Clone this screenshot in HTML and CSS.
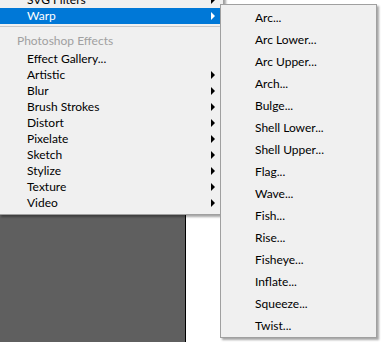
FILE: index.html
```html
<!DOCTYPE html>
<html lang="en">
<head>
  <meta charset="UTF-8">
  <title>Filter Menu</title>
  <link rel="stylesheet" href="styles.css">
</head>
<body>
  <div class="workspace">
    <div class="panel"></div>
    <div class="doc"></div>

    <ul class="menu">
      <li class="item has-sub">SVG Filters</li>
      <li class="item has-sub active">Warp</li>
      <li class="sep"></li>
      <li class="header">Photoshop Effects</li>
      <li class="item">Effect Gallery...</li>
      <li class="item has-sub">Artistic</li>
      <li class="item has-sub">Blur</li>
      <li class="item has-sub">Brush Strokes</li>
      <li class="item has-sub">Distort</li>
      <li class="item has-sub">Pixelate</li>
      <li class="item has-sub">Sketch</li>
      <li class="item has-sub">Stylize</li>
      <li class="item has-sub">Texture</li>
      <li class="item has-sub">Video</li>
    </ul>

    <ul class="submenu">
      <li>Arc...</li>
      <li>Arc Lower...</li>
      <li>Arc Upper...</li>
      <li>Arch...</li>
      <li>Bulge...</li>
      <li>Shell Lower...</li>
      <li>Shell Upper...</li>
      <li>Flag...</li>
      <li>Wave...</li>
      <li>Fish...</li>
      <li>Rise...</li>
      <li>Fisheye...</li>
      <li>Inflate...</li>
      <li>Squeeze...</li>
      <li>Twist...</li>
    </ul>
  </div>
</body>
</html>
```

FILE: styles.css
```css
body {
  margin: 0;
  font-family: Lato, "Noto Sans", sans-serif;
  font-size: 12px;
  color: #000;
  background: #fff;
}
ul {
  list-style: none;
  margin: 0;
  padding: 0;
}
.workspace {
  position: relative;
  display: flex;
  height: 342px;
  overflow: hidden;
}
.panel {
  width: 185px;
  background: #5f5f5f;
  border-right: 1px solid #000;
}
.doc {
  flex: 1;
  background: #fff;
}

.menu {
  position: absolute;
  left: -1px;
  top: -11px;
  width: 223px;
  padding: 2px 0 3px;
  background: #f0f0f0;
  border: 1px solid #a0a0a0;
  box-shadow: 2px 2px 2px rgba(0, 0, 0, 0.35);
}
.item, .header {
  position: relative;
  height: 16px;
  line-height: 16px;
  padding-left: 27px;
  white-space: nowrap;
}
.header {
  padding-left: 17px;
  color: #a0a0a0;
  height: 17px;
  line-height: 14px;
}
.item.active {
  background: #0078d7;
  color: #fff;
}
.has-sub::after {
  content: "";
  position: absolute;
  right: 8px;
  top: 4px;
  border-left: 4px solid #000;
  border-top: 4px solid transparent;
  border-bottom: 4px solid transparent;
}
.item.active::after {
  border-left-color: #fff;
}
.sep {
  height: 1px;
  margin: 2px 0 7px;
  background: #c8c8c8;
}

.submenu {
  position: absolute;
  left: 220px;
  top: 4px;
  width: 155px;
  padding: 2px 0 0;
  background: #f0f0f0;
  border: 1px solid #a0a0a0;
  box-shadow: 2px 2px 2px rgba(0, 0, 0, 0.35);
}
.submenu li {
  height: 22px;
  line-height: 22px;
  padding-left: 34px;
  white-space: nowrap;
}
```
